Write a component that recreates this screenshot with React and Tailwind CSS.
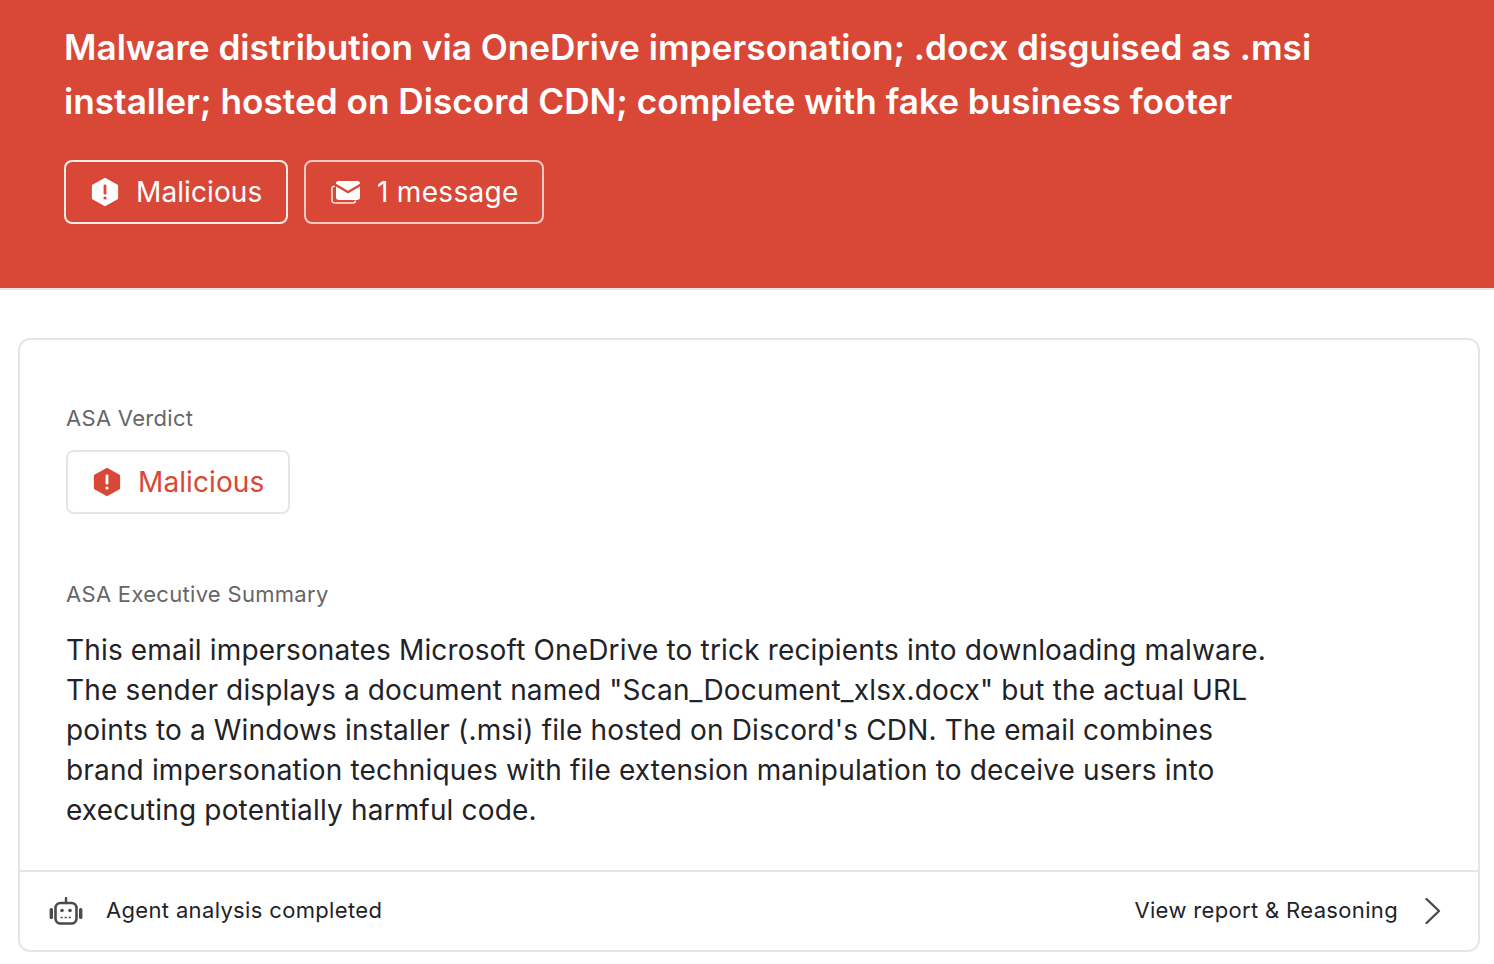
import React from 'react'

function HexAlert({ fill, mark }) {
  return (
    <svg width="28" height="30" viewBox="0 0 28 30" className="shrink-0">
      <path d="M14 .8 L26.6 7.8 a1 1 0 0 1 .5 .9 V21.3 a1 1 0 0 1 -.5 .9 L14 29.2 L1.4 22.2 a1 1 0 0 1 -.5 -.9 V8.7 a1 1 0 0 1 .5 -.9 Z" fill={fill} />
      <rect x="12.6" y="7.5" width="2.8" height="10" rx="1.2" fill={mark} />
      <circle cx="14" cy="21" r="1.6" fill={mark} />
    </svg>
  )
}

function MailStack() {
  return (
    <svg width="30" height="24" viewBox="0 0 30 24" className="shrink-0">
      <path d="M4 6.5 H2.6 A1.6 1.6 0 0 0 1 8.1 V20.4 A2.6 2.6 0 0 0 3.6 23 H22 A2.4 2.4 0 0 0 24.4 20.6" fill="none" stroke="#fff" strokeOpacity="0.85" strokeWidth="1.6" />
      <path d="M7.5 1 H26.5 A2.5 2.5 0 0 1 29 3.5 V3.8 L17 10.8 L5 3.8 V3.5 A2.5 2.5 0 0 1 7.5 1 Z" fill="#fff" />
      <path d="M5 6.4 L17 13.4 L29 6.4 V17 A3 3 0 0 1 26 20 H8 A3 3 0 0 1 5 17 Z" fill="#fff" />
    </svg>
  )
}

function RobotIcon() {
  return (
    <svg width="34" height="28" viewBox="0 0 34 28" fill="none" className="shrink-0">
      <path d="M17 1 V6" stroke="#4b4b4b" strokeWidth="2.4" strokeLinecap="round" />
      <rect x="6.5" y="6" width="21" height="20.5" rx="5" stroke="#4b4b4b" strokeWidth="2.6" />
      <rect x="0.6" y="11" width="3.4" height="11" rx="1.5" fill="#4b4b4b" />
      <rect x="30" y="11" width="3.4" height="11" rx="1.5" fill="#4b4b4b" />
      <circle cx="13" cy="13.5" r="1.8" fill="#4b4b4b" />
      <circle cx="21" cy="13.5" r="1.8" fill="#4b4b4b" />
      <path d="M11.5 20.5 H22.5" stroke="#4b4b4b" strokeWidth="1.6" strokeDasharray="2.2 1.9" />
    </svg>
  )
}

function Chevron() {
  return (
    <svg width="18" height="28" viewBox="0 0 18 28" fill="none" className="shrink-0">
      <path d="M2.5 2 L15 14 L2.5 26" stroke="#4a4a4a" strokeWidth="2.4" strokeLinecap="round" strokeLinejoin="round" />
    </svg>
  )
}

export default function App() {
  return (
    <div className="w-[1494px] h-[964px] overflow-hidden bg-white font-['Inter',sans-serif] text-[#1f2328]">
      <header className="h-[290px] bg-[#d94736] border-b-2 border-[#e3e3e3] pl-[64px] pt-[20px]">
        <h1 className="w-[1300px] text-[35.2px] leading-[54px] font-semibold text-white">
          Malware distribution via OneDrive impersonation; .docx disguised as .msi installer; hosted on Discord CDN; complete with fake business footer
        </h1>
        <div className="flex gap-4 mt-[32px]">
          <div className="flex items-center gap-[17px] h-[64px] w-[224px] pl-[25px] border-2 border-white/90 rounded-lg text-white text-[28px] tracking-[0.1px]">
            <HexAlert fill="#fff" mark="#d94736" />
            <span>Malicious</span>
          </div>
          <div className="flex items-center gap-[16px] h-[64px] w-[240px] pl-[25px] border-2 border-white/70 rounded-lg text-white text-[28px] tracking-[0.3px]">
            <MailStack />
            <span>1 message</span>
          </div>
        </div>
      </header>

      <div className="ml-[18px] mr-[14px] mt-[48px] h-[614px] border-2 border-[#e6e6e6] rounded-xl flex flex-col">
        <div className="flex-1 pl-[46px] pt-[62px]">
          <div className="text-[22px] tracking-[0.3px] leading-[32px] text-[#666666]">ASA Verdict</div>
          <div className="flex items-center gap-[17px] h-[64px] w-[224px] mt-[16px] pl-[25px] border-2 border-[#e6e6e6] rounded-lg text-[#d94736] text-[28px] tracking-[0.1px]">
            <HexAlert fill="#d94736" mark="#fff" />
            <span>Malicious</span>
          </div>
          <div className="mt-[64px] text-[22px] tracking-[0.3px] leading-[32px] text-[#666666]">ASA Executive Summary</div>
          <p className="mt-[20px] w-[1210px] text-[28px] tracking-[0.16px] leading-[40px] text-[#1f2328]">
            This email impersonates Microsoft OneDrive to trick recipients into downloading malware. The sender displays a document named "Scan_Document_xlsx.docx" but the actual URL points to a Windows installer (.msi) file hosted on Discord's CDN. The email combines brand impersonation techniques with file extension manipulation to deceive users into executing potentially harmful code.
          </p>
        </div>
        <div className="h-[80px] border-t-2 border-[#e6e6e6] flex items-center justify-between pl-[29px] pr-[36px]">
          <div className="flex items-center gap-[23px]">
            <RobotIcon />
            <span className="text-[22px] tracking-[0.34px] leading-[32px] pb-[2px]">Agent analysis completed</span>
          </div>
          <div className="flex items-center gap-[26px]">
            <span className="text-[22px] tracking-[0.34px] leading-[32px] pb-[2px]">View report &amp; Reasoning</span>
            <Chevron />
          </div>
        </div>
      </div>
    </div>
  )
}
